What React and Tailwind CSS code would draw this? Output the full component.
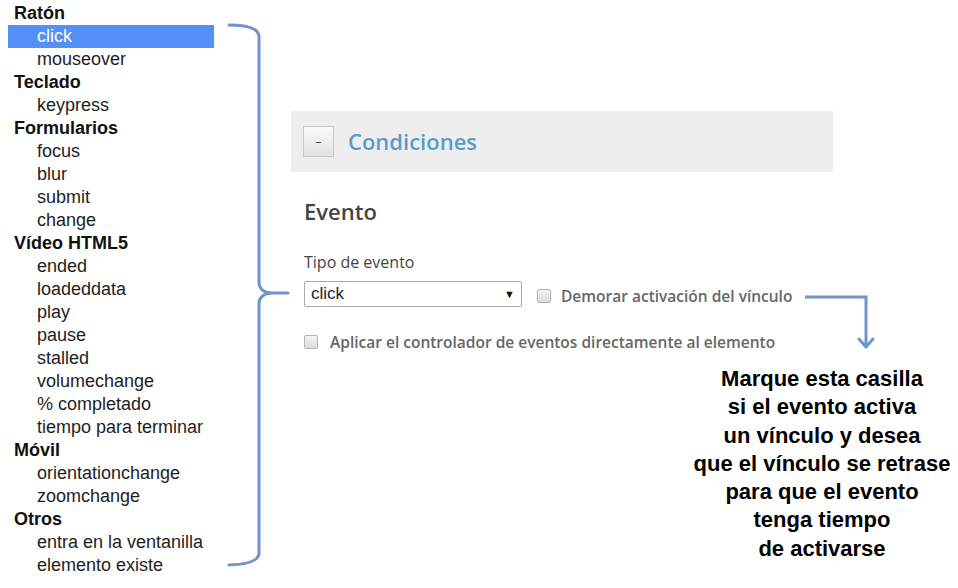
import React from 'react';

const groups = [
    ['Ratón', ['click', 'mouseover']],
    ['Teclado', ['keypress']],
    ['Formularios', ['focus', 'blur', 'submit', 'change']],
    ['Vídeo HTML5', ['ended', 'loadeddata', 'play', 'pause', 'stalled', 'volumechange', '% completado', 'tiempo para terminar']],
    ['Móvil', ['orientationchange', 'zoomchange']],
    ['Otros', ['entra en la ventanilla', 'elemento existe']],
];

const Checkbox = () => (
    <span className="inline-block w-[14px] h-[14px] shrink-0 rounded-[2px] border border-[#b5b5b5] bg-gradient-to-b from-[#f4f4f4] to-[#dcdcdc]" />
);

const App = () => {
    return (
        <div className="relative w-[958px] h-[588px] bg-white flex overflow-hidden">
            {/* event list */}
            <div className="w-[214px] pl-2 pt-[2px] font-['Liberation_Sans',Arial,sans-serif] text-[18px] leading-[23px] text-[#1e1e1e]">
                {groups.map(([title, items]) => (
                    <div key={title}>
                        <div className="pl-[6px] font-bold text-[#111]">{title}</div>
                        {items.map(item => (
                            <div
                                key={item}
                                className={item === 'click' ? 'pl-[29px] bg-[#5390f8] text-white' : 'pl-[29px]'}
                            >
                                {item}
                            </div>
                        ))}
                    </div>
                ))}
            </div>

            {/* bracket */}
            <svg width="77" height="588" viewBox="0 0 77 588" className="shrink-0">
                <path
                    d="M15 25 Q45 25 45 37 L45 282 Q45 293 60 293 L74 293 M60 293 Q45 293 45 304 L45 553 Q45 564 15 565"
                    fill="none"
                    stroke="#6e95cd"
                    strokeWidth="3"
                    strokeLinecap="round"
                />
            </svg>

            {/* conditions panel */}
            <div className="flex-1 pt-[111px] font-['Open_Sans',sans-serif]">
                <div className="w-[542px] h-[61px] bg-[#eeeeee] flex items-center pl-3 gap-[14px]">
                    <button className="w-[31px] h-[31px] border border-[#c8c8c8] bg-gradient-to-b from-[#fafafa] to-[#e2e2e2] text-[#444] text-[12px] leading-none flex items-center justify-center">
                        –
                    </button>
                    <span className="text-[22px] font-semibold text-[#5b9bc9] leading-none -mt-[2px]">Condiciones</span>
                </div>

                <div className="pl-[13px]">
                    <div className="mt-[25px] text-[22px] font-semibold text-[#444] leading-[29px]">Evento</div>
                    <div className="mt-[26px] text-[16px] text-[#444] leading-[20px]">Tipo de evento</div>
                    <div className="mt-[9px] flex items-center gap-[15px]">
                        <div className="w-[218px] h-[26px] border border-[#aaa] rounded-[2px] flex items-center justify-between pl-[6px] pr-[6px] font-['Liberation_Sans',Arial,sans-serif] text-[17px] text-[#222]">
                            <span>click</span>
                            <span className="text-[11px] text-[#111]">▼</span>
                        </div>
                        <div className="flex items-center gap-[10px] mt-[3px]">
                            <Checkbox />
                            <span className="text-[15.5px] font-semibold text-[#666] leading-[22px]">Demorar activación del vínculo</span>
                        </div>
                    </div>
                    <div className="mt-[24px] flex items-center gap-[12px]">
                        <Checkbox />
                        <span className="text-[15.5px] font-semibold text-[#666] leading-[22px]">Aplicar el controlador de eventos directamente al elemento</span>
                    </div>
                </div>

                <div className="ml-[396px] mt-[12px] w-[270px] text-center font-['Liberation_Sans',Arial,sans-serif] font-bold text-[22px] leading-[28.3px] text-black">
                    <div>Marque esta casilla</div>
                    <div>si el evento activa</div>
                    <div>un vínculo y desea</div>
                    <div className="whitespace-nowrap">que el vínculo se retrase</div>
                    <div>para que el evento</div>
                    <div>tenga tiempo</div>
                    <div>de activarse</div>
                </div>
            </div>

            {/* callout arrow */}
            <svg width="80" height="66" viewBox="0 0 80 66" className="absolute left-[800px] top-[288px]">
                <path d="M5 9 L66 9 L66 58" fill="none" stroke="#6e95cd" strokeWidth="3" />
                <path d="M59 51 L66 59 L73 51" fill="none" stroke="#6e95cd" strokeWidth="3" strokeLinejoin="round" strokeLinecap="round" />
            </svg>
        </div>
    );
};

export default App;
